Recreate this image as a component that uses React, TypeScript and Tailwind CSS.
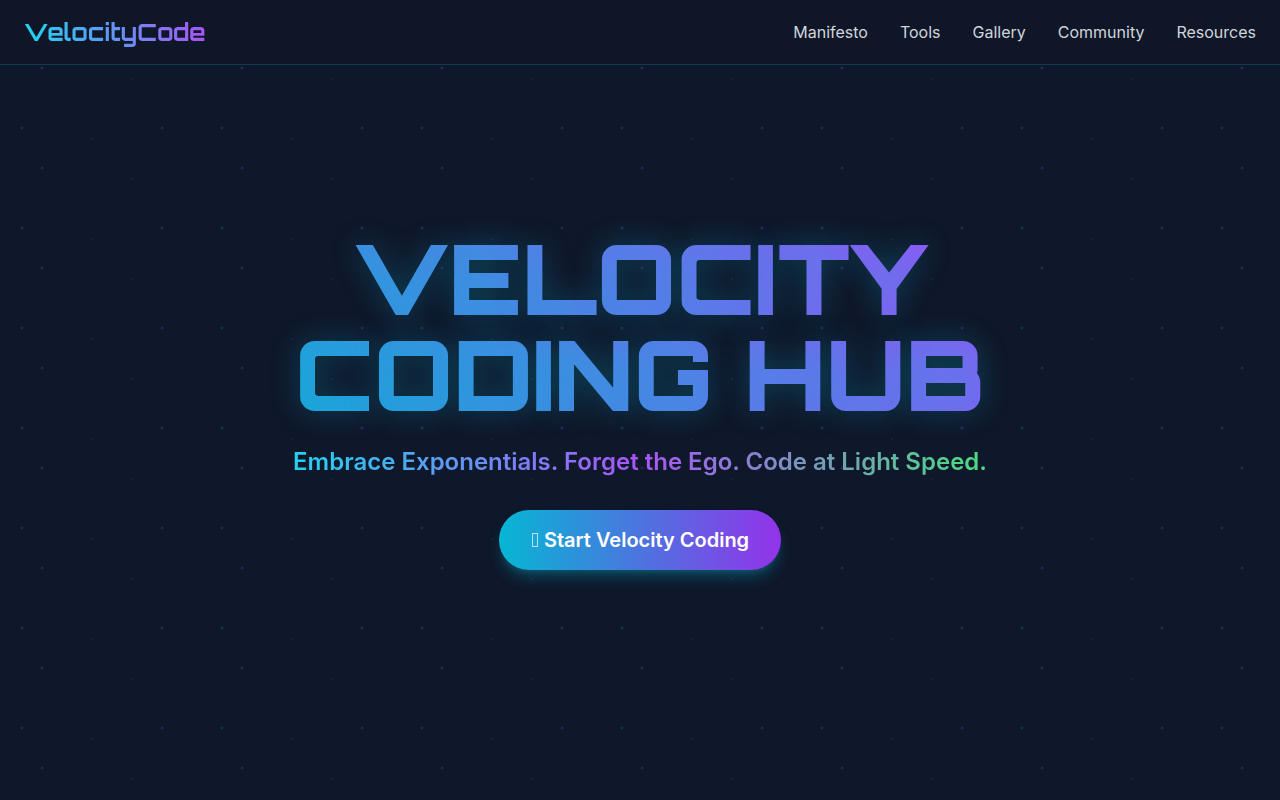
const links = ["Manifesto", "Tools", "Gallery", "Community", "Resources"];

function Header() {
  return (
    <header className="fixed inset-x-0 top-0 z-10 border-b border-[#06b6d4]/25 bg-[#0e1628]">
      <nav className="flex h-16 items-center justify-between px-6">
        <a
          href="#top"
          className="bg-linear-to-r/srgb from-[#22d3ee] to-[#a855f7] bg-clip-text font-[Orbitron,'DejaVu_Sans',sans-serif] text-2xl font-bold text-transparent"
        >
          VelocityCode
        </a>
        <ul className="flex gap-8">
          {links.map((label) => (
            <li key={label}>
              <a href={`#${label.toLowerCase()}`} className="text-base text-[#d1d5db] hover:text-[#22d3ee]">
                {label}
              </a>
            </li>
          ))}
        </ul>
      </nav>
    </header>
  );
}

export default function App() {
  return (
    <div
      id="top"
      className="min-h-screen bg-[#0f172a] bg-[radial-gradient(2px_2px_at_22px_28px,#06b6d44d,transparent),radial-gradient(2px_2px_at_42px_68px,#a855f74d,transparent),radial-gradient(1px_1px_at_92px_39px,#22c55e4d,transparent),radial-gradient(1px_1px_at_132px_79px,#22c55e4d,transparent),radial-gradient(2px_2px_at_162px_28px,#a855f74d,transparent)] bg-size-[200px_100px] font-[Inter,sans-serif] text-white"
    >
      <Header />
      <main className="flex min-h-screen items-center justify-center">
        <section className="w-full max-w-4xl text-center">
          <h1 className="mb-6 bg-linear-45/srgb from-[#0cafd5] to-[#aa46fc] bg-clip-text font-[Orbitron,'DejaVu_Sans',sans-serif] text-8xl leading-none font-black text-transparent [text-shadow:0_0_30px_#06b6d44d]">
            VELOCITY CODING HUB
          </h1>
          <p className="mx-auto mb-8 w-fit bg-linear-to-r/srgb from-[#22d3ee] via-[#a855f7] to-[#4ade80] bg-clip-text text-2xl font-semibold text-transparent">
            Embrace Exponentials. Forget the Ego. Code at Light Speed.
          </p>
          <button
            type="button"
            className="rounded-full bg-linear-to-r/srgb from-[#06b6d4] to-[#9333ea] px-8 py-4 text-xl font-semibold text-white shadow-lg shadow-[#06b6d4]/30"
          >
            <span aria-hidden="true" className="mx-px inline-block h-3.5 w-1.5 border border-white/70" /> Start Velocity
            Coding
          </button>
        </section>
      </main>
    </div>
  );
}
